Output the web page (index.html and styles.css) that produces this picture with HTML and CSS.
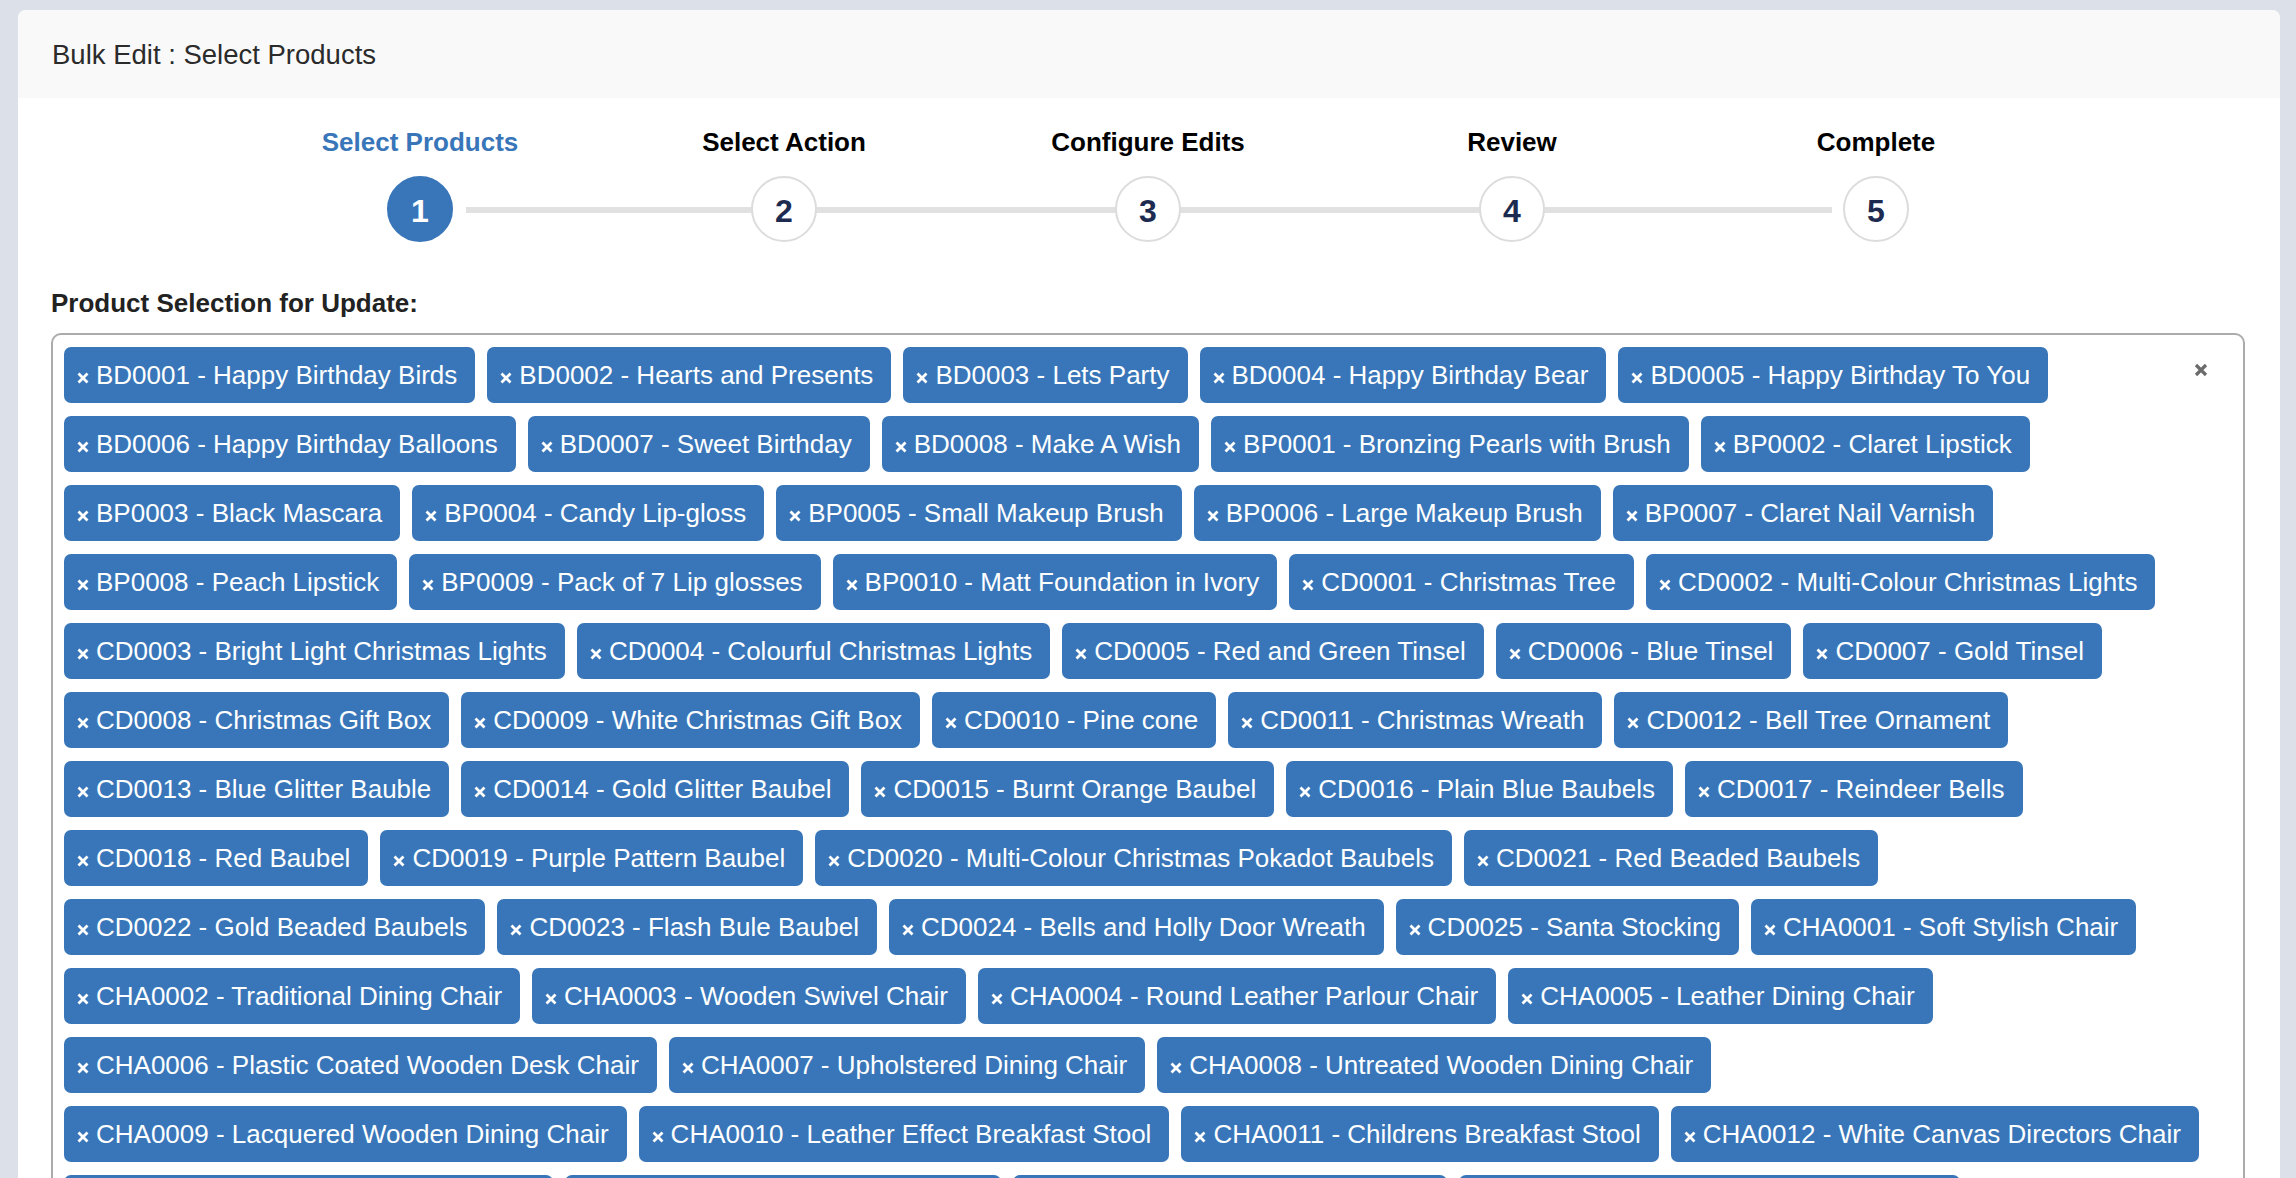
FILE: index.html
```html
<!DOCTYPE html>
<html lang="en">
<head>
<meta charset="utf-8">
<title>Bulk Edit : Select Products</title>
<link rel="stylesheet" href="styles.css">
</head>
<body>
<main class="page">
  <section class="card">
    <header class="card-header">Bulk Edit : Select Products</header>
    <div class="card-body">
      <ol class="stepper">
        <li class="step active"><span class="step-label">Select Products</span><span class="step-dot">1</span></li>
        <li class="step"><span class="step-label">Select Action</span><span class="step-dot">2</span></li>
        <li class="step"><span class="step-label">Configure Edits</span><span class="step-dot">3</span></li>
        <li class="step"><span class="step-label">Review</span><span class="step-dot">4</span></li>
        <li class="step"><span class="step-label">Complete</span><span class="step-dot">5</span></li>
      </ol>

      <div class="field-label">Product Selection for Update:</div>
      <div class="multiselect">
        <ul class="chips">
          <li class="chip"><svg class="chip-x" viewBox="0 0 12 12"><path d="M1.5 1.5 10.5 10.5M10.5 1.5 1.5 10.5"/></svg>BD0001 - Happy Birthday Birds</li>
          <li class="chip"><svg class="chip-x" viewBox="0 0 12 12"><path d="M1.5 1.5 10.5 10.5M10.5 1.5 1.5 10.5"/></svg>BD0002 - Hearts and Presents</li>
          <li class="chip"><svg class="chip-x" viewBox="0 0 12 12"><path d="M1.5 1.5 10.5 10.5M10.5 1.5 1.5 10.5"/></svg>BD0003 - Lets Party</li>
          <li class="chip"><svg class="chip-x" viewBox="0 0 12 12"><path d="M1.5 1.5 10.5 10.5M10.5 1.5 1.5 10.5"/></svg>BD0004 - Happy Birthday Bear</li>
          <li class="chip"><svg class="chip-x" viewBox="0 0 12 12"><path d="M1.5 1.5 10.5 10.5M10.5 1.5 1.5 10.5"/></svg>BD0005 - Happy Birthday To You</li>
          <li class="chip"><svg class="chip-x" viewBox="0 0 12 12"><path d="M1.5 1.5 10.5 10.5M10.5 1.5 1.5 10.5"/></svg>BD0006 - Happy Birthday Balloons</li>
          <li class="chip"><svg class="chip-x" viewBox="0 0 12 12"><path d="M1.5 1.5 10.5 10.5M10.5 1.5 1.5 10.5"/></svg>BD0007 - Sweet Birthday</li>
          <li class="chip"><svg class="chip-x" viewBox="0 0 12 12"><path d="M1.5 1.5 10.5 10.5M10.5 1.5 1.5 10.5"/></svg>BD0008 - Make A Wish</li>
          <li class="chip"><svg class="chip-x" viewBox="0 0 12 12"><path d="M1.5 1.5 10.5 10.5M10.5 1.5 1.5 10.5"/></svg>BP0001 - Bronzing Pearls with Brush</li>
          <li class="chip"><svg class="chip-x" viewBox="0 0 12 12"><path d="M1.5 1.5 10.5 10.5M10.5 1.5 1.5 10.5"/></svg>BP0002 - Claret Lipstick</li>
          <li class="chip"><svg class="chip-x" viewBox="0 0 12 12"><path d="M1.5 1.5 10.5 10.5M10.5 1.5 1.5 10.5"/></svg>BP0003 - Black Mascara</li>
          <li class="chip"><svg class="chip-x" viewBox="0 0 12 12"><path d="M1.5 1.5 10.5 10.5M10.5 1.5 1.5 10.5"/></svg>BP0004 - Candy Lip-gloss</li>
          <li class="chip"><svg class="chip-x" viewBox="0 0 12 12"><path d="M1.5 1.5 10.5 10.5M10.5 1.5 1.5 10.5"/></svg>BP0005 - Small Makeup Brush</li>
          <li class="chip"><svg class="chip-x" viewBox="0 0 12 12"><path d="M1.5 1.5 10.5 10.5M10.5 1.5 1.5 10.5"/></svg>BP0006 - Large Makeup Brush</li>
          <li class="chip"><svg class="chip-x" viewBox="0 0 12 12"><path d="M1.5 1.5 10.5 10.5M10.5 1.5 1.5 10.5"/></svg>BP0007 - Claret Nail Varnish</li>
          <li class="chip"><svg class="chip-x" viewBox="0 0 12 12"><path d="M1.5 1.5 10.5 10.5M10.5 1.5 1.5 10.5"/></svg>BP0008 - Peach Lipstick</li>
          <li class="chip"><svg class="chip-x" viewBox="0 0 12 12"><path d="M1.5 1.5 10.5 10.5M10.5 1.5 1.5 10.5"/></svg>BP0009 - Pack of 7 Lip glosses</li>
          <li class="chip"><svg class="chip-x" viewBox="0 0 12 12"><path d="M1.5 1.5 10.5 10.5M10.5 1.5 1.5 10.5"/></svg>BP0010 - Matt Foundation in Ivory</li>
          <li class="chip"><svg class="chip-x" viewBox="0 0 12 12"><path d="M1.5 1.5 10.5 10.5M10.5 1.5 1.5 10.5"/></svg>CD0001 - Christmas Tree</li>
          <li class="chip"><svg class="chip-x" viewBox="0 0 12 12"><path d="M1.5 1.5 10.5 10.5M10.5 1.5 1.5 10.5"/></svg>CD0002 - Multi-Colour Christmas Lights</li>
          <li class="chip"><svg class="chip-x" viewBox="0 0 12 12"><path d="M1.5 1.5 10.5 10.5M10.5 1.5 1.5 10.5"/></svg>CD0003 - Bright Light Christmas Lights</li>
          <li class="chip"><svg class="chip-x" viewBox="0 0 12 12"><path d="M1.5 1.5 10.5 10.5M10.5 1.5 1.5 10.5"/></svg>CD0004 - Colourful Christmas Lights</li>
          <li class="chip"><svg class="chip-x" viewBox="0 0 12 12"><path d="M1.5 1.5 10.5 10.5M10.5 1.5 1.5 10.5"/></svg>CD0005 - Red and Green Tinsel</li>
          <li class="chip"><svg class="chip-x" viewBox="0 0 12 12"><path d="M1.5 1.5 10.5 10.5M10.5 1.5 1.5 10.5"/></svg>CD0006 - Blue Tinsel</li>
          <li class="chip"><svg class="chip-x" viewBox="0 0 12 12"><path d="M1.5 1.5 10.5 10.5M10.5 1.5 1.5 10.5"/></svg>CD0007 - Gold Tinsel</li>
          <li class="chip"><svg class="chip-x" viewBox="0 0 12 12"><path d="M1.5 1.5 10.5 10.5M10.5 1.5 1.5 10.5"/></svg>CD0008 - Christmas Gift Box</li>
          <li class="chip"><svg class="chip-x" viewBox="0 0 12 12"><path d="M1.5 1.5 10.5 10.5M10.5 1.5 1.5 10.5"/></svg>CD0009 - White Christmas Gift Box</li>
          <li class="chip"><svg class="chip-x" viewBox="0 0 12 12"><path d="M1.5 1.5 10.5 10.5M10.5 1.5 1.5 10.5"/></svg>CD0010 - Pine cone</li>
          <li class="chip"><svg class="chip-x" viewBox="0 0 12 12"><path d="M1.5 1.5 10.5 10.5M10.5 1.5 1.5 10.5"/></svg>CD0011 - Christmas Wreath</li>
          <li class="chip"><svg class="chip-x" viewBox="0 0 12 12"><path d="M1.5 1.5 10.5 10.5M10.5 1.5 1.5 10.5"/></svg>CD0012 - Bell Tree Ornament</li>
          <li class="chip"><svg class="chip-x" viewBox="0 0 12 12"><path d="M1.5 1.5 10.5 10.5M10.5 1.5 1.5 10.5"/></svg>CD0013 - Blue Glitter Bauble</li>
          <li class="chip"><svg class="chip-x" viewBox="0 0 12 12"><path d="M1.5 1.5 10.5 10.5M10.5 1.5 1.5 10.5"/></svg>CD0014 - Gold Glitter Baubel</li>
          <li class="chip"><svg class="chip-x" viewBox="0 0 12 12"><path d="M1.5 1.5 10.5 10.5M10.5 1.5 1.5 10.5"/></svg>CD0015 - Burnt Orange Baubel</li>
          <li class="chip"><svg class="chip-x" viewBox="0 0 12 12"><path d="M1.5 1.5 10.5 10.5M10.5 1.5 1.5 10.5"/></svg>CD0016 - Plain Blue Baubels</li>
          <li class="chip"><svg class="chip-x" viewBox="0 0 12 12"><path d="M1.5 1.5 10.5 10.5M10.5 1.5 1.5 10.5"/></svg>CD0017 - Reindeer Bells</li>
          <li class="chip"><svg class="chip-x" viewBox="0 0 12 12"><path d="M1.5 1.5 10.5 10.5M10.5 1.5 1.5 10.5"/></svg>CD0018 - Red Baubel</li>
          <li class="chip"><svg class="chip-x" viewBox="0 0 12 12"><path d="M1.5 1.5 10.5 10.5M10.5 1.5 1.5 10.5"/></svg>CD0019 - Purple Pattern Baubel</li>
          <li class="chip"><svg class="chip-x" viewBox="0 0 12 12"><path d="M1.5 1.5 10.5 10.5M10.5 1.5 1.5 10.5"/></svg>CD0020 - Multi-Colour Christmas Pokadot Baubels</li>
          <li class="chip"><svg class="chip-x" viewBox="0 0 12 12"><path d="M1.5 1.5 10.5 10.5M10.5 1.5 1.5 10.5"/></svg>CD0021 - Red Beaded Baubels</li>
          <li class="chip"><svg class="chip-x" viewBox="0 0 12 12"><path d="M1.5 1.5 10.5 10.5M10.5 1.5 1.5 10.5"/></svg>CD0022 - Gold Beaded Baubels</li>
          <li class="chip"><svg class="chip-x" viewBox="0 0 12 12"><path d="M1.5 1.5 10.5 10.5M10.5 1.5 1.5 10.5"/></svg>CD0023 - Flash Bule Baubel</li>
          <li class="chip"><svg class="chip-x" viewBox="0 0 12 12"><path d="M1.5 1.5 10.5 10.5M10.5 1.5 1.5 10.5"/></svg>CD0024 - Bells and Holly Door Wreath</li>
          <li class="chip"><svg class="chip-x" viewBox="0 0 12 12"><path d="M1.5 1.5 10.5 10.5M10.5 1.5 1.5 10.5"/></svg>CD0025 - Santa Stocking</li>
          <li class="chip"><svg class="chip-x" viewBox="0 0 12 12"><path d="M1.5 1.5 10.5 10.5M10.5 1.5 1.5 10.5"/></svg>CHA0001 - Soft Stylish Chair</li>
          <li class="chip"><svg class="chip-x" viewBox="0 0 12 12"><path d="M1.5 1.5 10.5 10.5M10.5 1.5 1.5 10.5"/></svg>CHA0002 - Traditional Dining Chair</li>
          <li class="chip"><svg class="chip-x" viewBox="0 0 12 12"><path d="M1.5 1.5 10.5 10.5M10.5 1.5 1.5 10.5"/></svg>CHA0003 - Wooden Swivel Chair</li>
          <li class="chip"><svg class="chip-x" viewBox="0 0 12 12"><path d="M1.5 1.5 10.5 10.5M10.5 1.5 1.5 10.5"/></svg>CHA0004 - Round Leather Parlour Chair</li>
          <li class="chip"><svg class="chip-x" viewBox="0 0 12 12"><path d="M1.5 1.5 10.5 10.5M10.5 1.5 1.5 10.5"/></svg>CHA0005 - Leather Dining Chair</li>
          <li class="chip"><svg class="chip-x" viewBox="0 0 12 12"><path d="M1.5 1.5 10.5 10.5M10.5 1.5 1.5 10.5"/></svg>CHA0006 - Plastic Coated Wooden Desk Chair</li>
          <li class="chip"><svg class="chip-x" viewBox="0 0 12 12"><path d="M1.5 1.5 10.5 10.5M10.5 1.5 1.5 10.5"/></svg>CHA0007 - Upholstered Dining Chair</li>
          <li class="chip"><svg class="chip-x" viewBox="0 0 12 12"><path d="M1.5 1.5 10.5 10.5M10.5 1.5 1.5 10.5"/></svg>CHA0008 - Untreated Wooden Dining Chair</li>
          <li class="chip"><svg class="chip-x" viewBox="0 0 12 12"><path d="M1.5 1.5 10.5 10.5M10.5 1.5 1.5 10.5"/></svg>CHA0009 - Lacquered Wooden Dining Chair</li>
          <li class="chip"><svg class="chip-x" viewBox="0 0 12 12"><path d="M1.5 1.5 10.5 10.5M10.5 1.5 1.5 10.5"/></svg>CHA0010 - Leather Effect Breakfast Stool</li>
          <li class="chip"><svg class="chip-x" viewBox="0 0 12 12"><path d="M1.5 1.5 10.5 10.5M10.5 1.5 1.5 10.5"/></svg>CHA0011 - Childrens Breakfast Stool</li>
          <li class="chip"><svg class="chip-x" viewBox="0 0 12 12"><path d="M1.5 1.5 10.5 10.5M10.5 1.5 1.5 10.5"/></svg>CHA0012 - White Canvas Directors Chair</li>
          <li class="chip"><svg class="chip-x" viewBox="0 0 12 12"><path d="M1.5 1.5 10.5 10.5M10.5 1.5 1.5 10.5"/></svg>CHA0013 - Black Leather Office Chair</li>
          <li class="chip"><svg class="chip-x" viewBox="0 0 12 12"><path d="M1.5 1.5 10.5 10.5M10.5 1.5 1.5 10.5"/></svg>CHA0014 - Padded Kitchen Stool</li>
          <li class="chip"><svg class="chip-x" viewBox="0 0 12 12"><path d="M1.5 1.5 10.5 10.5M10.5 1.5 1.5 10.5"/></svg>CHA0015 - Garden Folding Chair</li>
          <li class="chip"><svg class="chip-x" viewBox="0 0 12 12"><path d="M1.5 1.5 10.5 10.5M10.5 1.5 1.5 10.5"/></svg>CHA0016 - Modern Swivel Office Chair</li>
          <li class="chip"><svg class="chip-x" viewBox="0 0 12 12"><path d="M1.5 1.5 10.5 10.5M10.5 1.5 1.5 10.5"/></svg>CHA0017 - Mid Century Modern Lounge Chair</li>
        </ul>
        <button class="clear-all" type="button" aria-label="Clear all"><svg viewBox="0 0 14 14"><path d="M2 2 12 12M12 2 2 12"/></svg></button>
      </div>
    </div>
  </section>
</main>
</body>
</html>
```

FILE: styles.css
```css
* { box-sizing: border-box; }

html, body {
  margin: 0;
  height: 100%;
  overflow: hidden;
}

body {
  background: #dce0e8;
  font-family: "Liberation Sans", Arial, Helvetica, sans-serif;
  color: #222;
}

.page {
  height: 100%;
  padding: 10px 16px 0 18px;
}

.card {
  height: 100%;
  background: #fff;
  border-radius: 8px 8px 0 0;
  overflow: hidden;
}

.card-header {
  background: #f9f9f9;
  padding: 30px 34px 28px;
  font-size: 27.5px;
  line-height: 30px;
  color: #2b2b2b;
}

.card-body {
  padding: 0 35px 0 33px;
}

/* Stepper */
.stepper {
  list-style: none;
  margin: 0;
  padding: 30px 0 0;
  display: grid;
  grid-template-columns: repeat(5, 364px);
  justify-content: center;
  background-image: linear-gradient(#e1e1e1, #e1e1e1);
  background-repeat: no-repeat;
  background-size: 1366px 6px;
  background-position: 415px 109px;
}

.step {
  display: flex;
  flex-direction: column;
  align-items: center;
}

.step-label {
  font-size: 26px;
  line-height: 29px;
  font-weight: bold;
  color: #000;
  white-space: nowrap;
}

.step-dot {
  margin-top: 19px;
  width: 66px;
  height: 66px;
  border-radius: 50%;
  border: 2px solid #dcdcdc;
  background: #fff;
  color: #1c2b4f;
  font-size: 32px;
  font-weight: bold;
  display: flex;
  align-items: center;
  justify-content: center;
  padding-top: 5px;
}

.step.active .step-label { color: #3876b9; }
.step.active .step-dot {
  background: #3876b9;
  border-color: #3876b9;
  color: #fff;
}

/* Field */
.field-label {
  margin-top: 47px;
  font-size: 26px;
  line-height: 29px;
  font-weight: bold;
  color: #222;
}

.multiselect {
  position: relative;
  margin-top: 15px;
  border: 2px solid #ababab;
  border-radius: 10px;
  padding: 12px 11px 12px 11px;
}

.chips {
  list-style: none;
  margin: 0;
  padding: 0;
  display: flex;
  flex-wrap: wrap;
  gap: 13px 12px;
}

.chip {
  height: 56px;
  line-height: 56px;
  padding: 0 18px 0 13px;
  border-radius: 7px;
  background: #3876b9;
  color: #fff;
  font-size: 26px;
  white-space: nowrap;
}

.chip-x {
  width: 12px;
  height: 12px;
  margin-right: 7px;
  vertical-align: baseline;
  fill: none;
  stroke: #fff;
  stroke-width: 2.8;
}

.clear-all {
  position: absolute;
  top: 26px;
  right: 33px;
  width: 18px;
  height: 18px;
  padding: 2px;
  border: 0;
  background: transparent;
  cursor: pointer;
}

.clear-all svg {
  display: block;
  width: 14px;
  height: 14px;
  fill: none;
  stroke: #6b6b6b;
  stroke-width: 3.2;
}
```
